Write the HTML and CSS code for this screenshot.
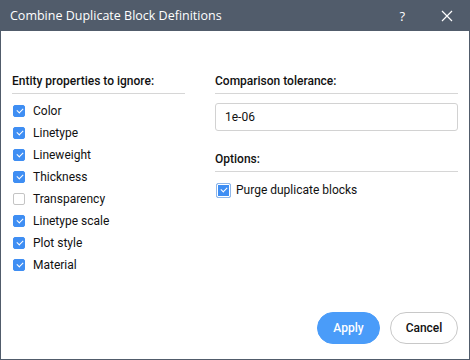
FILE: index.html
```html
<!DOCTYPE html>
<html lang="en">
<head>
  <meta charset="UTF-8" />
  <title>Combine Duplicate Block Definitions</title>
  <link rel="stylesheet" href="styles.css">
</head>
<body>
  <div class="dialog">
    <div class="titlebar">
      <span class="title">Combine Duplicate Block Definitions</span>
      <span class="help">?</span>
      <svg class="close" width="12" height="12" viewBox="0 0 12 12">
        <path d="M1 1 L11 11 M11 1 L1 11" stroke="#fff" stroke-width="1.2" fill="none"/>
      </svg>
    </div>

    <div class="content">
      <div class="columns">
        <div class="column left">
          <div class="group-title">Entity properties to ignore:</div>
          <ul class="checks">
            <li><span class="box checked"></span>Color</li>
            <li><span class="box checked"></span>Linetype</li>
            <li><span class="box checked"></span>Lineweight</li>
            <li><span class="box checked"></span>Thickness</li>
            <li><span class="box"></span>Transparency</li>
            <li><span class="box checked"></span>Linetype scale</li>
            <li><span class="box checked"></span>Plot style</li>
            <li><span class="box checked"></span>Material</li>
          </ul>
        </div>

        <div class="column right">
          <div class="group-title">Comparison tolerance:</div>
          <div class="input">1e-06</div>
          <div class="group-title options">Options:</div>
          <ul class="checks">
            <li class="focused"><span class="box checked"></span>Purge duplicate blocks</li>
          </ul>
        </div>
      </div>

      <div class="buttons">
        <button class="btn primary">Apply</button>
        <button class="btn">Cancel</button>
      </div>
    </div>
  </div>
</body>
</html>
```

FILE: styles.css
```css
* {
  box-sizing: border-box;
}
body {
  margin: 0;
  font-family: Roboto, "Liberation Sans", sans-serif;
  background: #fff;
}
.dialog {
  width: 470px;
  height: 360px;
  border: 1px solid #515c6b;
  border-top: none;
  display: flex;
  flex-direction: column;
}
.titlebar {
  height: 31px;
  background: #515c6b;
  color: #fff;
  display: flex;
  align-items: center;
  padding: 0 0 0 9px;
  flex-shrink: 0;
}
.title {
  font-family: "Open Sans", "Noto Sans", sans-serif;
  font-size: 12.5px;
  flex: 1;
}
.help {
  font-family: "Open Sans", sans-serif;
  font-size: 13px;
  margin-right: 36px;
}
.close {
  margin-right: 16px;
}
.content {
  flex: 1;
  display: flex;
  flex-direction: column;
  padding: 43px 11px 15px 11px;
}
.columns {
  display: flex;
  gap: 30px;
  flex: 1;
}
.column.left {
  width: 173px;
}
.column.right {
  flex: 1;
}
.group-title {
  font-size: 12px;
  font-weight: 500;
  color: #111;
  padding-bottom: 5px;
  border-bottom: 1px solid #d6d6d6;
  margin-bottom: 6px;
}
.group-title.options {
  margin-bottom: 7px;
}
.checks {
  list-style: none;
  margin: 0;
  padding: 0;
}
.checks li {
  display: flex;
  align-items: center;
  height: 22px;
  font-size: 12px;
  color: #111;
}
.box {
  width: 12px;
  height: 12px;
  border: 1px solid #c4c4c4;
  border-radius: 2px;
  margin: 0 8px 0 1px;
  background: #fff;
  position: relative;
}
.box.checked {
  background: #3f8ef3;
  border-color: #3f8ef3;
}
.box.checked::after {
  content: "";
  position: absolute;
  left: 2.5px;
  top: 1.5px;
  width: 5px;
  height: 3px;
  border-left: 1.3px solid #fff;
  border-bottom: 1.3px solid #fff;
  transform: rotate(-45deg);
}
.checks li.focused .box {
  width: 15px;
  height: 15px;
  border: 1.5px solid #8fb7ea;
  box-shadow: inset 0 0 0 1px #fff;
  margin: 0 5px 0 1px;
}
.checks li.focused .box::after {
  left: 3.5px;
  top: 3px;
}
.input {
  height: 28px;
  border: 1px solid #d2d2d2;
  border-radius: 3px;
  font-size: 12px;
  color: #111;
  padding: 0 0 0 9px;
  display: flex;
  align-items: center;
  margin: 9px 0 21px;
}
.buttons {
  display: flex;
  justify-content: flex-end;
  gap: 10px;
}
.btn {
  width: 68px;
  height: 32px;
  border-radius: 16px;
  border: 1px solid #c8c8c8;
  background: #fff;
  font-family: Roboto, "Liberation Sans", sans-serif;
  font-size: 12px;
  font-weight: 500;
  color: #111;
  padding: 0;
}
.btn.primary {
  width: 63px;
  background: #4a9cf9;
  border-color: #4a9cf9;
  color: #fff;
}
```
